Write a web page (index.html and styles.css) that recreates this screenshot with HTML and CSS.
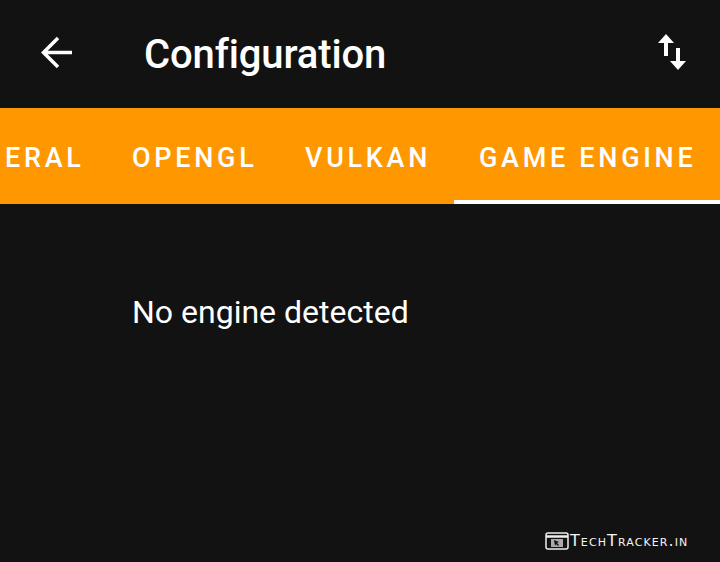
FILE: index.html
```html
<!DOCTYPE html>
<html>
<head>
    <title>Configuration</title>
    <link rel="stylesheet" href="styles.css">
</head>
<body>
    <div class="toolbar">
        <svg class="back" width="36" height="36" viewBox="0 0 36 36">
            <path d="M34 16.500H5.500M20 2L5.500 16.500 20 31" fill="none" stroke="#fff" stroke-width="3.500"/>
        </svg>
        <h1 class="title">Configuration</h1>
        <svg class="swap" width="32" height="40" viewBox="0 0 32 40">
            <path d="M10 0L2 9h6v13h4V9h6zM22 36l8-9h-6V14h-4v13h-6z" fill="#fff"/>
        </svg>
    </div>
    <div class="tabs">
        <div class="tab tab-cut">ERAL</div>
        <div class="tab tab-opengl">OPENGL</div>
        <div class="tab tab-vulkan">VULKAN</div>
        <div class="tab tab-active">GAME ENGINE</div>
    </div>
    <div class="content">
        <p class="empty">No engine detected</p>
    </div>
    <div class="watermark">
        <svg width="24" height="18" viewBox="0 0 24 18">
            <rect x="1" y="1" width="22" height="16" rx="2" fill="none" stroke="#eee" stroke-width="1.500"/>
            <path d="M1 4.500h22" stroke="#eee" stroke-width="2.500"/>
            <rect x="6" y="7" width="12" height="8" fill="#aaa"/>
            <path d="M9 8l5 2-2 1 2 2-1 1-2-2-1 2z" fill="#111"/>
        </svg>
        <span class="wm-text">TechTracker.in</span>
    </div>
</body>
</html>
```

FILE: styles.css
```css
html, body {
    margin: 0;
    height: 562px;
    overflow: hidden;
}
body {
    background-color: #121212;
    font-family: Roboto, sans-serif;
    color: #fff;
    display: flex;
    flex-direction: column;
}
.toolbar {
    height: 108px;
    display: flex;
    align-items: center;
    padding: 0 32px 0 38px;
    box-sizing: border-box;
}
.back {
    margin-right: 70px;
    flex-shrink: 0;
}
.title {
    flex: 1;
    margin: 0;
    padding-top: 2px;
    font-size: 40px;
    font-weight: 500;
    line-height: 1;
    letter-spacing: -0.12px;
}
.tabs {
    height: 96px;
    background-color: #ff9800;
    display: flex;
    overflow: hidden;
    font-size: 27px;
    font-weight: 500;
    letter-spacing: 3.7px;
}
.tab {
    display: flex;
    align-items: center;
    box-sizing: border-box;
    padding-top: 4px;
    white-space: nowrap;
}
.tab-cut {
    padding-left: 5px;
    width: 132px;
}
.tab-opengl {
    width: 173px;
}
.tab-vulkan {
    width: 149px;
}
.tab-active {
    flex: 1;
    padding-left: 25px;
    padding-top: 8px;
    border-bottom: 4px solid #fff;
}
.content {
    flex: 1;
    padding: 89px 0 0 132px;
}
.empty {
    margin: 0;
    font-size: 32px;
    line-height: 38px;
}
.watermark {
    position: absolute;
    left: 545px;
    top: 531px;
    display: flex;
    align-items: center;
    gap: 1px;
    color: #f4f4f4;
}
.wm-text {
    font-family: "DejaVu Sans", sans-serif;
    font-variant: small-caps;
    font-size: 16px;
    letter-spacing: 1.1px;
}
```
